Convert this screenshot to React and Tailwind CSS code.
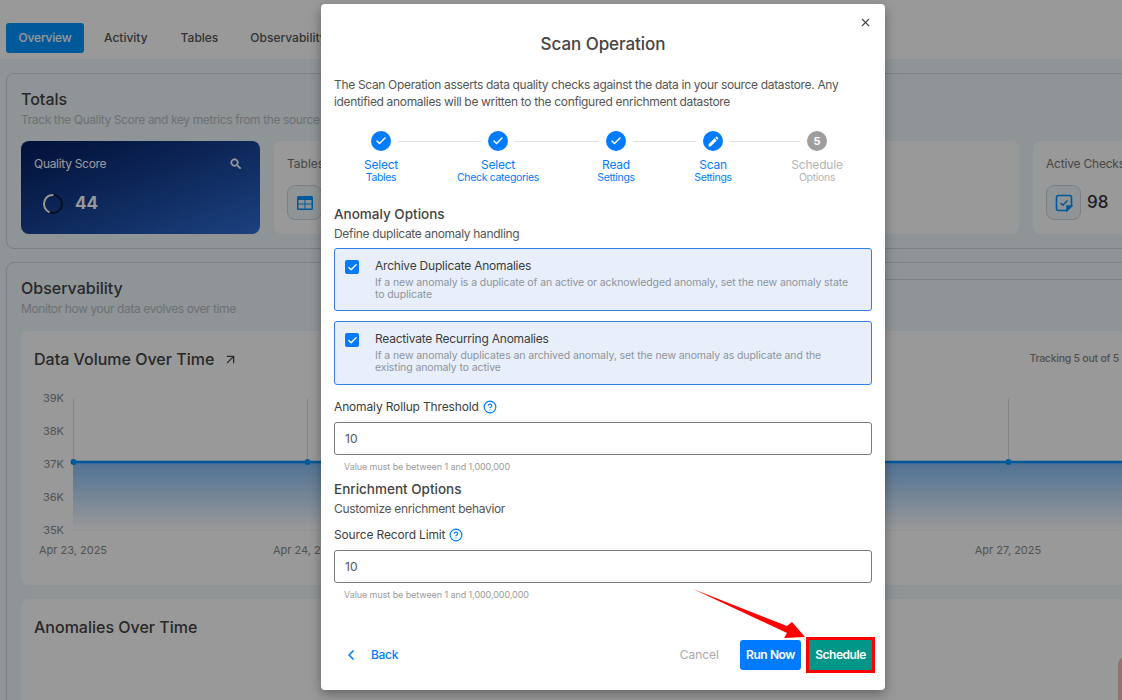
import React from 'react';
import { X, Check, CircleHelp, ChevronLeft, ArrowUpRight } from 'lucide-react';

const steps = [
    { title: 'Select', sub: 'Tables', state: 'done' },
    { title: 'Select', sub: 'Check categories', state: 'done', line: 'w-[83px]' },
    { title: 'Read', sub: 'Settings', state: 'done', line: 'w-[84px]' },
    { title: 'Scan', sub: 'Settings', state: 'edit', line: 'w-[63px]' },
    { title: 'Schedule', sub: 'Options', state: 'todo', line: 'w-[70px]' },
];

const options = [
    {
        title: 'Archive Duplicate Anomalies',
        text: 'If a new anomaly is a duplicate of an active or acknowledged anomaly, set the new anomaly state to duplicate',
        height: 'h-[63px]',
    },
    {
        title: 'Reactivate Recurring Anomalies',
        text: 'If a new anomaly duplicates an archived anomaly, set the new anomaly as duplicate and the existing anomaly to active',
        height: 'h-[64px] mt-[10px]',
    },
];

const ticks = [39.5, 273.5, 506.5, 740.5, 974.5];
const yLabels = [['39K', 12], ['38K', 45], ['37K', 78], ['36K', 111], ['35K', 144]];

const StepIcon = ({ state }) => {
    if (state === 'done') {
        return (
            <div className="w-5 h-5 rounded-full bg-[#007bff] flex items-center justify-center">
                <Check size={12} strokeWidth={3} className="text-white" />
            </div>
        );
    }
    if (state === 'edit') {
        return (
            <div className="w-5 h-5 rounded-full bg-[#007bff] flex items-center justify-center">
                <svg width="13" height="13" viewBox="0 0 24 24" fill="white">
                    <path d="M3 17.25V21h3.75L17.81 9.94l-3.75-3.75L3 17.25zM20.71 7.04c.39-.39.39-1.02 0-1.41l-2.34-2.34a.9959.9959 0 0 0-1.41 0l-1.83 1.83 3.75 3.75 1.83-1.83z" />
                </svg>
            </div>
        );
    }
    return <div className="w-5 h-5 rounded-full bg-[#9e9e9e] flex items-center justify-center text-white text-[11px] font-bold">5</div>;
};

const Stepper = () => (
    <div className="flex mt-[21px] pl-[37px]">
        {steps.map((step, i) => (
            <React.Fragment key={i}>
                {step.line && <div className={`h-px bg-[#e0e0e0] mt-[10px] mx-[7px] ${step.line}`} />}
                <div className="w-5 flex flex-col items-center">
                    <StepIcon state={step.state} />
                    <div className={`mt-[7px] text-[12px] leading-[14px] tracking-[-0.2px] whitespace-nowrap ${step.state === 'todo' ? 'text-[#b4b4b4]' : 'text-[#007bff]'}`}>{step.title}</div>
                    <div className={`text-[10.5px] leading-[12px] tracking-[-0.33px] whitespace-nowrap ${step.state === 'todo' ? 'text-[#b4b4b4]' : 'text-[#007bff]'}`}>{step.sub}</div>
                </div>
            </React.Fragment>
        ))}
    </div>
);

const OptionBox = ({ title, text, height }) => (
    <div className={`flex rounded-[3px] border border-[#2f7fe6] bg-[#e8effb] pl-[10px] pr-[12px] pt-[9px] ${height}`}>
        <div className="w-[14px] h-[14px] mt-[2px] rounded-[2px] bg-[#007bff] flex items-center justify-center shrink-0">
            <Check size={11} strokeWidth={3} className="text-white" />
        </div>
        <div className="ml-4">
            <div className="text-[12px] leading-[16px] text-[#3c3c3c] tracking-[-0.22px]">{title}</div>
            <div className="mt-[3px] text-[10.5px] leading-[12px] text-[#8d939b] tracking-[-0.1px]">{text}</div>
        </div>
    </div>
);

const NumberField = ({ label, help, top }) => (
    <>
        <div className={`flex items-center gap-[4px] text-[12px] leading-[16px] text-[#3c3c3c] tracking-[-0.15px] ${top}`}>
            {label}
            <CircleHelp size={14} className="text-[#007bff]" />
        </div>
        <div className="mt-[7px] h-[33px] rounded-[3px] border border-[#7a7a7a] pl-[10px] flex items-center text-[12px] text-[#555]">10</div>
        <div className="mt-[6px] pl-[10px] text-[9px] leading-[12px] text-[#9a9a9a] tracking-[-0.08px]">{help}</div>
    </>
);

const ScanModal = () => (
    <div className="absolute left-[321px] top-[4px] w-[564px] h-[686px] bg-white rounded-[4px] shadow-[0_4px_12px_rgba(0,0,0,0.35)] px-[13px]">
        <X size={13} strokeWidth={2} className="absolute right-[13px] top-[12px] text-[#444]" />
        <h2 className="mt-[28px] text-center text-[17px] leading-[24px] font-medium text-[#444] tracking-[-0.05px]">Scan Operation</h2>
        <p className="mt-[20px] text-[12px] leading-[17px] text-[#555] tracking-[-0.33px]">
            The Scan Operation asserts data quality checks against the data in your source datastore. Any identified anomalies will be written to the configured enrichment datastore
        </p>
        <Stepper />

        <div className="mt-[20px] text-[13.5px] leading-[20px] font-medium text-[#444]">Anomaly Options</div>
        <div className="mt-[2px] mb-[6px] text-[12px] leading-[16px] text-[#555] tracking-[-0.32px]">Define duplicate anomaly handling</div>
        {options.map((opt) => <OptionBox key={opt.title} {...opt} />)}

        <NumberField label="Anomaly Rollup Threshold" help="Value must be between 1 and 1,000,000" top="mt-[14px]" />

        <div className="mt-[6px] text-[13.5px] leading-[20px] font-medium text-[#444]">Enrichment Options</div>
        <div className="mt-[2px] text-[12px] leading-[16px] text-[#555] tracking-[-0.32px]">Customize enrichment behavior</div>

        <NumberField label="Source Record Limit" help="Value must be between 1 and 1,000,000,000" top="mt-[10px]" />

        <div className="mt-[39px] h-[30px] flex items-center text-[12px]">
            <ChevronLeft size={16} strokeWidth={2.5} className="ml-[9px] text-[#007bff]" />
            <span className="ml-[12px] text-[#007bff] font-medium tracking-[-0.3px]">Back</span>
            <span className="ml-auto text-[#a8a8a8]">Cancel</span>
            <button className="ml-[21px] w-[61px] h-[30px] rounded-[3px] bg-[#007bff] text-white font-semibold tracking-[-0.4px]">Run Now</button>
            <button className="ml-[8px] w-[63px] h-[30px] bg-[#009688] text-white font-semibold tracking-[-0.45px] outline-[3px] outline-[#ff0000]">Schedule</button>
        </div>
    </div>
);

const VolumeChart = () => (
    <svg width="1090" height="170" className="block mt-[17px]" fontFamily="Inter, sans-serif">
        <defs>
            <linearGradient id="area" x1="0" y1="0" x2="0" y2="1">
                <stop offset="0" stopColor="#85bdf8" />
                <stop offset="1" stopColor="#ffffff" />
            </linearGradient>
        </defs>
        {ticks.map((x) => <line key={x} x1={x} x2={x} y1="9" y2="72" stroke="#dcdcdc" />)}
        <rect x="39" y="72" width="1051" height="68" fill="url(#area)" />
        <line x1="39" x2="1090" y1="140.5" y2="140.5" stroke="#f0f0f0" />
        <line x1="39" x2="1090" y1="72" y2="72" stroke="#0095ff" strokeWidth="2.5" />
        {ticks.map((x) => <circle key={x} cx={x} cy="72" r="3" fill="#0095ff" />)}
        {yLabels.map(([t, y]) => <text key={t} x="30" y={y} textAnchor="end" fontSize="11" fill="#8a8a8a">{t}</text>)}
        <text x="39" y="164" textAnchor="middle" fontSize="11" fill="#8a8a8a">Apr 23, 2025</text>
        <text x="273" y="164" textAnchor="middle" fontSize="11" fill="#8a8a8a">Apr 24, 2025</text>
        <text x="974" y="164" textAnchor="middle" fontSize="11" fill="#8a8a8a">Apr 27, 2025</text>
    </svg>
);

const Dashboard = () => (
    <>
        <div className="h-[59px] bg-white pl-[6px] pt-[23px] flex items-start text-[12px] font-medium text-[#555]">
            <div className="h-[30px] w-[78px] rounded-[3px] bg-[#0095ff] text-white flex items-center justify-center font-medium tracking-[-0.2px]">Overview</div>
            <span className="ml-[20px] h-[30px] flex items-center">Activity</span>
            <span className="ml-[33px] h-[30px] flex items-center">Tables</span>
            <span className="ml-[32px] h-[30px] flex items-center">Observability</span>
        </div>

        <div className="h-[641px] bg-[#eef7fc] pl-[6px] pt-[14px] overflow-hidden">
            <div className="w-[1300px] h-[176px] rounded-lg border border-[#cdd5d9] pl-[14px] pt-[15px]">
                <h3 className="text-[16px] leading-[20px] font-medium text-[#444]">Totals</h3>
                <p className="mt-[2px] text-[12px] leading-[18px] text-[#b6bcc0] tracking-[-0.38px]">Track the Quality Score and key metrics from the source</p>
                <div className="mt-[12px] flex gap-[14px]">
                    <div className="w-[239px] h-[93px] shrink-0 rounded-lg bg-gradient-to-br from-[#051b5d] to-[#2f6ed5] pl-[13px] pr-[17px] pt-[14px]">
                        <div className="flex justify-between items-center text-[12px] text-white tracking-[-0.3px]">
                            Quality Score
                            <svg width="14" height="14" viewBox="0 0 24 24" fill="white" stroke="white" strokeWidth="1.2">
                                <path d="M15.5 14h-.79l-.28-.27C15.41 12.59 16 11.11 16 9.5 16 5.91 13.09 3 9.5 3S3 5.91 3 9.5 5.91 16 9.5 16c1.61 0 3.09-.59 4.23-1.57l.27.28v.79l5 4.99L20.49 19l-4.99-5zm-6 0C7.01 14 5 11.99 5 9.5S7.01 5 9.5 5 14 7.01 14 9.5 11.99 14 9.5 14z" />
                            </svg>
                        </div>
                        <div className="mt-[18px] ml-[8px] flex items-center gap-[11px]">
                            <svg width="22" height="22" viewBox="0 0 22 22" className="-rotate-90">
                                <circle cx="11" cy="11" r="9" fill="none" stroke="#0f1a30" strokeWidth="2" />
                                <circle cx="11" cy="11" r="9" fill="none" stroke="#ffffff" strokeWidth="2" strokeDasharray="25 57" transform="rotate(-158 11 11)" />
                            </svg>
                            <span className="text-[17px] font-bold text-white">44</span>
                        </div>
                    </div>
                    <div className="w-[239px] h-[93px] shrink-0 rounded-lg bg-white pl-[13px] pt-[14px]">
                        <div className="text-[12px] text-[#777]">Tables</div>
                        <div className="mt-[12px] w-[35px] h-[35px] rounded-lg border border-[#ccd6dc] bg-[#eef7fc] flex items-center justify-center">
                            <svg width="16" height="14" viewBox="0 0 16 14" fill="#0095ff">
                                <rect width="16" height="14" rx="1.5" />
                                <rect x="1.5" y="4" width="6" height="3.5" fill="#eef7fc" />
                                <rect x="8.5" y="4" width="6" height="3.5" fill="#eef7fc" />
                                <rect x="1.5" y="8.5" width="6" height="4" fill="#eef7fc" />
                                <rect x="8.5" y="8.5" width="6" height="4" fill="#eef7fc" />
                            </svg>
                        </div>
                    </div>
                    <div className="w-[239px] h-[93px] shrink-0 rounded-lg bg-white" />
                    <div className="w-[239px] h-[93px] shrink-0 rounded-lg bg-white" />
                    <div className="w-[239px] h-[93px] shrink-0 rounded-lg bg-white pl-[13px] pt-[14px]">
                        <div className="text-[12px] text-[#777] tracking-[-0.2px]">Active Checks</div>
                        <div className="mt-[12px] flex items-center gap-[6px]">
                            <div className="w-[35px] h-[35px] rounded-lg border border-[#ccd6dc] bg-[#eef7fc] flex items-center justify-center">
                                <svg width="18" height="18" viewBox="0 0 18 18" fill="none" stroke="#0095ff" strokeWidth="1.6">
                                    <path d="M3.5 1.5h11a2 2 0 0 1 2 2V12l-5 4.5h-8a2 2 0 0 1-2-2v-11a2 2 0 0 1 2-2z" />
                                    <path d="M12 16.5V12h4.5z" fill="#0095ff" />
                                    <path d="M5.5 9l2.3 2.2L12.5 6.5" />
                                </svg>
                            </div>
                            <span className="text-[17px] font-medium text-[#333]">98</span>
                        </div>
                    </div>
                </div>
            </div>

            <div className="relative w-[1180px] h-[500px] mt-[13px] rounded-lg border border-[#cdd5d9] pl-[14px] pt-[14px]">
                <div className="absolute left-[600px] right-0 top-[16px] border-b border-[#cdd5d9]" />
                <h3 className="text-[16px] leading-[22px] font-medium text-[#444]">Observability</h3>
                <p className="mt-[1px] text-[12px] leading-[18px] text-[#b6bcc0] tracking-[-0.4px]">Monitor how your data evolves over time</p>
                <div className="mt-[13px] w-[1150px] h-[254px] rounded-lg bg-white pl-[13px] pt-[14px]">
                    <div className="w-[1085px] h-[28px] flex items-center">
                        <span className="text-[16px] font-medium text-[#444]">Data Volume Over Time</span>
                        <ArrowUpRight size={15} className="ml-[9px] text-[#444]" />
                        <span className="ml-auto text-[10.5px] font-medium text-[#888] tracking-[-0.25px]">Tracking 5 out of 5</span>
                    </div>
                    <VolumeChart />
                </div>
                <div className="relative mt-[14px] w-[1150px] h-[120px] rounded-lg bg-white pl-[13px] pt-[14px]">
                    <span className="text-[16px] leading-[28px] font-medium text-[#444]">Anomalies Over Time</span>
                    <div className="absolute left-[1097px] top-[58px] w-2 h-[60px] rounded-tl-lg bg-[#ecc4b8]" />
                </div>
            </div>
        </div>
    </>
);

const App = () => (
    <div className="relative h-[700px] overflow-hidden bg-white font-['Inter',sans-serif]">
        <Dashboard />
        <div className="absolute inset-0 bg-black/40" />
        <ScanModal />
        {/* annotation arrow pointing at the Schedule button */}
        <svg className="absolute inset-0" width="1122" height="700">
            <polygon points="693,589 787,626 792,622 805,637 784,638 787,633" fill="#ff0000" />
        </svg>
    </div>
);

export default App;
